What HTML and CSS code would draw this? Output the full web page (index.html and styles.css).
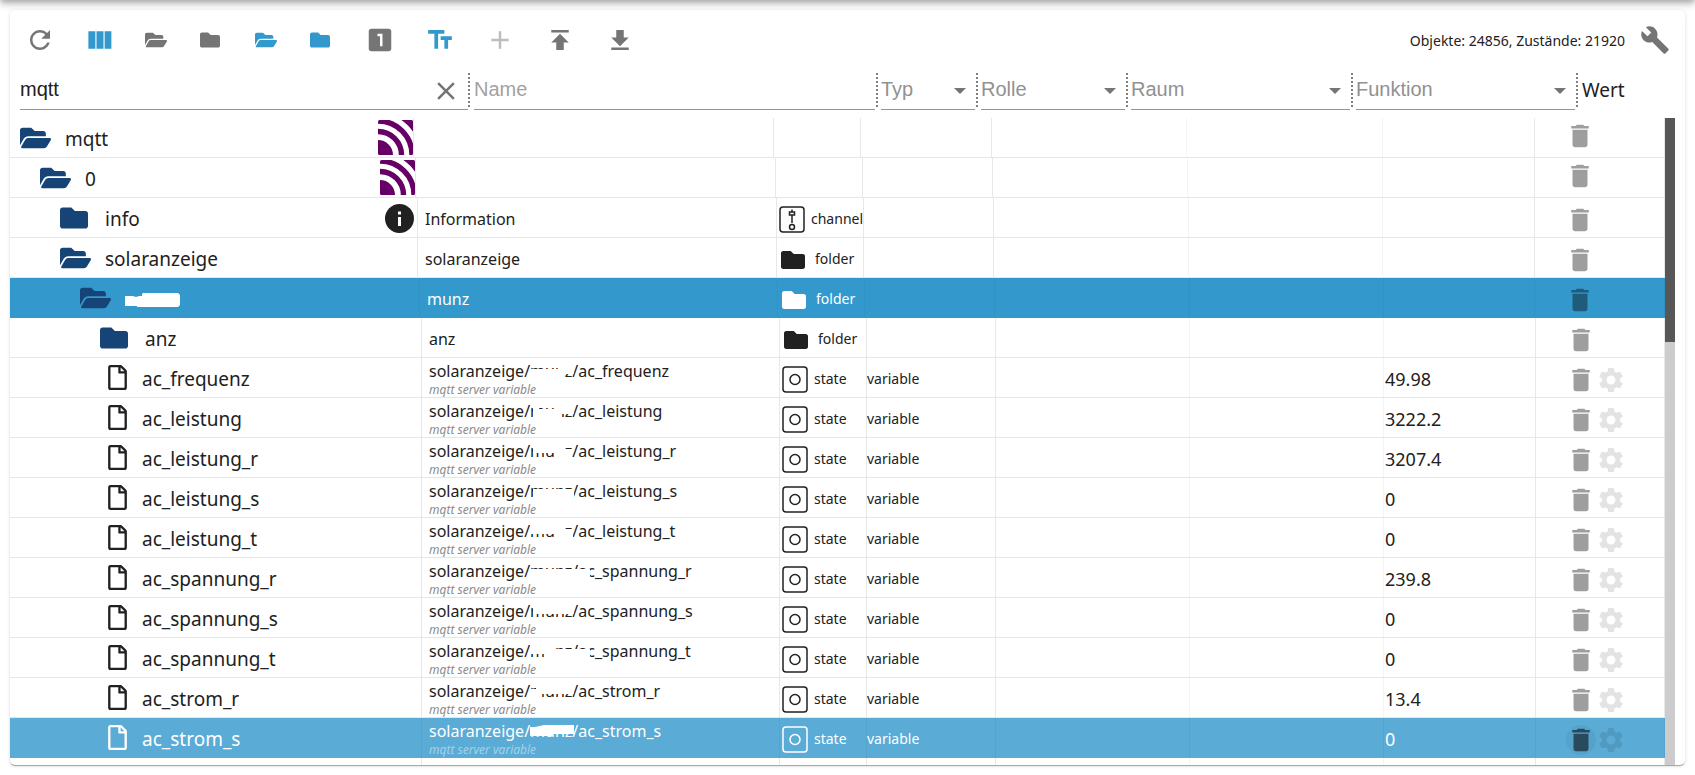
FILE: index.html
```
<!DOCTYPE html>
<html lang="de">
<head>
<meta charset="utf-8">
<title>Objekte</title>
<link rel="stylesheet" href="styles.css">
</head>
<body>
<svg class="sprite" aria-hidden="true">
  <symbol id="open" viewBox="0 0 576 512"><path d="M572.694 292.093L500.270 416.248A63.997 63.997 0 0 1 444.989 448H45.025c-18.523 0-30.064-20.093-20.731-36.093l72.424-124.155A64 64 0 0 1 152 256h399.964c18.523 0 30.064 20.093 20.730 36.093zM152 224h328v-48c0-26.510-21.490-48-48-48H272l-64-64H48C21.490 64 0 85.490 0 112v278.046l69.077-118.418C86.214 242.250 117.989 224 152 224z"/></symbol>
  <symbol id="closed" viewBox="0 0 512 512"><path d="M464 128H272l-64-64H48C21.490 64 0 85.490 0 112v288c0 26.510 21.490 48 48 48h416c26.510 0 48-21.490 48-48V176c0-26.510-21.490-48-48-48z"/></symbol>
  <symbol id="file" viewBox="0 0 384 512"><path d="M369.900 97.900L286 14C277 5 264.800-.1 252.100-.1H48C21.500 0 0 21.500 0 48v416c0 26.500 21.500 48 48 48h288c26.500 0 48-21.500 48-48V131.900c0-12.700-5.100-25-14.100-34zM332.100 128H256V51.900l76.100 76.100zM48 464V48h160v104c0 13.300 10.700 24 24 24h104v288H48z"/></symbol>
  <symbol id="trash" viewBox="0 0 24 24"><path d="M6 19c0 1.100.9 2 2 2h8c1.100 0 2-.9 2-2V7H6v12zM19 4h-3.500l-1-1h-5l-1 1H5v2h14V4z"/></symbol>
  <symbol id="gear" viewBox="0 0 24 24"><path d="M19.140 12.940c.04-.3.06-.61.06-.94 0-.32-.02-.64-.07-.94l2.030-1.580c.18-.14.23-.41.12-.61l-1.920-3.320c-.12-.22-.37-.29-.59-.22l-2.390.96c-.5-.38-1.030-.7-1.620-.94l-.36-2.540c-.04-.24-.24-.41-.48-.41h-3.840c-.24 0-.43.17-.47.41l-.36 2.540c-.59.24-1.130.57-1.620.94l-2.390-.96c-.22-.08-.47 0-.59.22L2.740 8.870c-.12.21-.08.47.12.61l2.030 1.580c-.05.3-.09.63-.09.94s.02.64.07.94l-2.030 1.580c-.18.14-.23.41-.12.61l1.920 3.320c.12.22.37.29.59.22l2.390-.96c.5.38 1.030.7 1.620.94l.36 2.540c.05.24.24.41.48.41h3.840c.24 0 .44-.17.47-.41l.36-2.540c.59-.24 1.130-.56 1.620-.94l2.390.96c.22.08.47 0 .59-.22l1.920-3.320c.12-.22.07-.47-.12-.61l-2.010-1.580zM12 15.600c-1.980 0-3.600-1.620-3.600-3.600s1.620-3.600 3.600-3.600 3.600 1.620 3.600 3.600-1.620 3.600-3.600 3.600z"/></symbol>
  <symbol id="state" viewBox="0 0 26 27"><rect x="1" y="1" width="24" height="25" rx="3" fill="none" stroke="currentColor" stroke-width="1.500"/><circle cx="13" cy="13.500" r="5" fill="none" stroke="currentColor" stroke-width="1.500"/></symbol>
  <symbol id="channel" viewBox="0 0 26 27"><g fill="none" stroke="currentColor" stroke-width="1.500"><rect x="1" y="1" width="24" height="25" rx="3"/><path d="M13 3.500v2M10.500 6h5v3h-5zM13 9v8"/><circle cx="13" cy="21" r="2.500"/></g></symbol>
  <symbol id="mqtt" viewBox="0 0 35 35"><clipPath id="sq"><rect width="35" height="35" rx="1.500"/></clipPath><g clip-path="url(#sq)" fill="none" stroke="#606" stroke-width="5.400"><circle cx="0" cy="35" r="15" fill="#606" stroke="none"/><circle cx="0" cy="35" r="23.500"/><circle cx="0" cy="35" r="34"/><circle cx="0" cy="35" r="47" stroke-width="10"/></g></symbol>
  <symbol id="arrow" viewBox="0 0 12 6"><path d="M0 0h12L6 6z"/></symbol>
</svg>
<div class="appbar-shadow"></div>
<main class="card">
  <div class="toolbar">
    <button class="tool" aria-label="Aktualisieren"><svg viewBox="0 0 24 24"><path d="M17.650 6.350C16.200 4.900 14.210 4 12 4c-4.420 0-7.990 3.580-7.990 8s3.570 8 7.990 8c3.730 0 6.840-2.550 7.730-6h-2.080c-.82 2.330-3.040 4-5.650 4-3.310 0-6-2.690-6-6s2.690-6 6-6c1.660 0 3.140.69 4.220 1.780L13 11h7V4l-2.350 2.350z"/></svg></button>
    <button class="tool blue" aria-label="Spalten"><svg viewBox="0 0 24 24"><path d="M2.700 5h5.600v14H2.700zM9.200 5h5.600v14H9.200zM15.700 5h5.400v14h-5.400z"/></svg></button>
    <button class="tool small" aria-label="Alle aufklappen"><svg><use href="#open"/></svg></button>
    <button class="tool small shut" aria-label="Alle zuklappen"><svg><use href="#closed"/></svg></button>
    <button class="tool small blue" aria-label="Eine Ebene aufklappen"><svg><use href="#open"/></svg></button>
    <button class="tool small shut blue" aria-label="Eine Ebene zuklappen"><svg><use href="#closed"/></svg></button>
    <button class="tool" aria-label="Zustände"><svg viewBox="0 0 24 24"><path d="M19 3H5c-1.100 0-2 .9-2 2v14c0 1.100.9 2 2 2h14c1.100 0 2-.9 2-2V5c0-1.100-.9-2-2-2zm-5 14h-2V9h-2V7h4v10z"/></svg></button>
    <button class="tool blue" aria-label="Beschreibungen"><svg viewBox="0 0 24 24"><path d="M2.500 4v3h5v12h3V7h5V4h-13zm19 5h-9v3h3v7h3v-7h3V9z"/></svg></button>
    <button class="tool" disabled aria-label="Hinzufügen"><svg viewBox="0 0 24 24"><path d="M19 13h-6v6h-2v-6H5v-2h6V5h2v6h6v2z"/></svg></button>
    <button class="tool" aria-label="Hochladen"><svg viewBox="0 0 24 24"><path d="M5 4v2h14V4H5zm0 10h4v6h6v-6h4l-7-7-7 7z"/></svg></button>
    <button class="tool" aria-label="Herunterladen"><svg viewBox="0 0 24 24"><path d="M19 10h-4V4H9v6H5l7 7 7-7zM5 18v2h14v-2H5z"/></svg></button>
    <span class="count">Objekte: 24856, Zustände: 21920</span>
    <button class="tool wrench" aria-label="Einstellungen"><svg viewBox="0 0 24 24"><path d="M22.700 19l-9.100-9.100c.9-2.300.4-5-1.500-6.900-2-2-5-2.400-7.400-1.300L9 6 6 9 1.600 4.700C.4 7.100.9 10.100 2.900 12.100c1.900 1.900 4.600 2.400 6.900 1.500l9.100 9.100c.4.4 1 .4 1.400 0l2.300-2.300c.5-.4.5-1.100.1-1.400z"/></svg></button>
  </div>
  <div class="filters">
    <div class="filter"><div class="field"><input type="text" value="mqtt" aria-label="ID"><button class="clear" aria-label="Leeren"><svg viewBox="0 0 24 24"><path d="M19 6.410L17.590 5 12 10.590 6.410 5 5 6.410 10.590 12 5 17.590 6.410 19 12 13.410 17.590 19 19 17.590 13.410 12z"/></svg></button></div></div>
    <div class="filter"><div class="field"><input type="text" placeholder="Name" aria-label="Name"></div></div>
    <div class="filter"><div class="field"><select aria-label="Typ"><option>Typ</option></select><svg><use href="#arrow"/></svg></div></div>
    <div class="filter"><div class="field"><select aria-label="Rolle"><option>Rolle</option></select><svg><use href="#arrow"/></svg></div></div>
    <div class="filter"><div class="field"><select aria-label="Raum"><option>Raum</option></select><svg><use href="#arrow"/></svg></div></div>
    <div class="filter"><div class="field"><select aria-label="Funktion"><option>Funktion</option></select><svg><use href="#arrow"/></svg></div></div>
    <div class="value-title">Wert</div>
  </div>
  <div class="view">
    <table class="tree">
      <tbody>
        <tr class="d0"><td class="id"><svg class="open"><use href="#open"/></svg><span>mqtt</span><svg class="logo"><use href="#mqtt"/></svg></td><td class="name"></td><td class="type"></td><td></td><td></td><td></td><td></td><td class="act high"><button aria-label="Löschen"><svg><use href="#trash"/></svg></button></td></tr>
        <tr class="d1"><td class="id"><svg class="open"><use href="#open"/></svg><span>0</span><svg class="logo"><use href="#mqtt"/></svg></td><td class="name"></td><td class="type"></td><td></td><td></td><td></td><td></td><td class="act high"><button aria-label="Löschen"><svg><use href="#trash"/></svg></button></td></tr>
        <tr class="d2"><td class="id"><svg class="closed"><use href="#closed"/></svg><span>info</span><svg class="info" viewBox="0 0 29 29"><circle cx="14.500" cy="14.500" r="14.500"/><path fill="#fff" d="M13 7.500h3v3h-3zM13 13h3v9h-3z"/></svg></td><td class="name">Information</td><td class="type"><svg class="box"><use href="#channel"/></svg><span>channel</span></td><td></td><td></td><td></td><td></td><td class="act"><button aria-label="Löschen"><svg><use href="#trash"/></svg></button></td></tr>
        <tr class="d2"><td class="id"><svg class="open"><use href="#open"/></svg><span>solaranzeige</span></td><td class="name">solaranzeige</td><td class="type"><svg class="dir"><use href="#closed"/></svg><span>folder</span></td><td></td><td></td><td></td><td></td><td class="act"><button aria-label="Löschen"><svg><use href="#trash"/></svg></button></td></tr>
        <tr class="d3 selected"><td class="id"><svg class="open"><use href="#open"/></svg><svg class="redact" viewBox="0 0 55 14"><path d="M0 3h8l3 1 3-1h3V1l1-1h35l2 2v10l-2 2H12v-1H0z"/></svg></td><td class="name">munz</td><td class="type"><svg class="dir"><use href="#closed"/></svg><span>folder</span></td><td></td><td></td><td></td><td></td><td class="act"><button aria-label="Löschen"><svg><use href="#trash"/></svg></button></td></tr>
        <tr class="d4"><td class="id"><svg class="closed"><use href="#closed"/></svg><span>anz</span></td><td class="name">anz</td><td class="type"><svg class="dir"><use href="#closed"/></svg><span>folder</span></td><td></td><td></td><td></td><td></td><td class="act"><button aria-label="Löschen"><svg><use href="#trash"/></svg></button></td></tr>
        <tr class="d4 leaf"><td class="id"><svg class="file"><use href="#file"/></svg><span>ac_frequenz</span></td><td class="name"><div>solaranzeige/<span class="hide">munz<svg viewBox="0 0 44 20"><path d="M0 5h28V1h16v9H34v3H0z"/></svg></span>/ac_frequenz</div><small>mqtt server variable</small></td><td class="type"><svg class="box"><use href="#state"/></svg><span>state</span></td><td class="role">variable</td><td></td><td></td><td class="val">49.98</td><td class="act"><button aria-label="Löschen"><svg><use href="#trash"/></svg></button><button class="cfg" aria-label="Konfigurieren"><svg><use href="#gear"/></svg></button></td></tr>
        <tr class="d4 leaf"><td class="id"><svg class="file"><use href="#file"/></svg><span>ac_leistung</span></td><td class="name"><div>solaranzeige/<span class="hide">munz<svg viewBox="0 0 44 20"><path d="M3 1h6v4h16V1h19v9H32v3H3z"/></svg></span>/ac_leistung</div><small>mqtt server variable</small></td><td class="type"><svg class="box"><use href="#state"/></svg><span>state</span></td><td class="role">variable</td><td></td><td></td><td class="val">3222.2</td><td class="act"><button aria-label="Löschen"><svg><use href="#trash"/></svg></button><button class="cfg" aria-label="Konfigurieren"><svg><use href="#gear"/></svg></button></td></tr>
        <tr class="d4 leaf"><td class="id"><svg class="file"><use href="#file"/></svg><span>ac_leistung_r</span></td><td class="name"><div>solaranzeige/<span class="hide">munz<svg viewBox="0 0 44 20"><path d="M3 1h31v4h8v8H24V9H3z"/></svg></span>/ac_leistung_r</div><small>mqtt server variable</small></td><td class="type"><svg class="box"><use href="#state"/></svg><span>state</span></td><td class="role">variable</td><td></td><td></td><td class="val">3207.4</td><td class="act"><button aria-label="Löschen"><svg><use href="#trash"/></svg></button><button class="cfg" aria-label="Konfigurieren"><svg><use href="#gear"/></svg></button></td></tr>
        <tr class="d4 leaf"><td class="id"><svg class="file"><use href="#file"/></svg><span>ac_leistung_s</span></td><td class="name"><div>solaranzeige/<span class="hide">munz<svg viewBox="0 0 44 20"><path d="M3 5h41v8H3z"/></svg></span>/ac_leistung_s</div><small>mqtt server variable</small></td><td class="type"><svg class="box"><use href="#state"/></svg><span>state</span></td><td class="role">variable</td><td></td><td></td><td class="val">0</td><td class="act"><button aria-label="Löschen"><svg><use href="#trash"/></svg></button><button class="cfg" aria-label="Konfigurieren"><svg><use href="#gear"/></svg></button></td></tr>
        <tr class="d4 leaf"><td class="id"><svg class="file"><use href="#file"/></svg><span>ac_leistung_t</span></td><td class="name"><div>solaranzeige/<span class="hide">munz<svg viewBox="0 0 44 20"><path d="M0 1h34v4h9v8H25v-3H0z"/></svg></span>/ac_leistung_t</div><small>mqtt server variable</small></td><td class="type"><svg class="box"><use href="#state"/></svg><span>state</span></td><td class="role">variable</td><td></td><td></td><td class="val">0</td><td class="act"><button aria-label="Löschen"><svg><use href="#trash"/></svg></button><button class="cfg" aria-label="Konfigurieren"><svg><use href="#gear"/></svg></button></td></tr>
        <tr class="d4 leaf"><td class="id"><svg class="file"><use href="#file"/></svg><span>ac_spannung_r</span></td><td class="name"><div>solaranzeige/<span class="hide">munz<svg viewBox="0 0 44 20"><path d="M0 5h60v8H0z"/></svg></span>/ac_spannung_r</div><small>mqtt server variable</small></td><td class="type"><svg class="box"><use href="#state"/></svg><span>state</span></td><td class="role">variable</td><td></td><td></td><td class="val">239.8</td><td class="act"><button aria-label="Löschen"><svg><use href="#trash"/></svg></button><button class="cfg" aria-label="Konfigurieren"><svg><use href="#gear"/></svg></button></td></tr>
        <tr class="d4 leaf"><td class="id"><svg class="file"><use href="#file"/></svg><span>ac_spannung_s</span></td><td class="name"><div>solaranzeige/<span class="hide">munz<svg viewBox="0 0 44 20"><path d="M3 1h41v9H3z"/></svg></span>/ac_spannung_s</div><small>mqtt server variable</small></td><td class="type"><svg class="box"><use href="#state"/></svg><span>state</span></td><td class="role">variable</td><td></td><td></td><td class="val">0</td><td class="act"><button aria-label="Löschen"><svg><use href="#trash"/></svg></button><button class="cfg" aria-label="Konfigurieren"><svg><use href="#gear"/></svg></button></td></tr>
        <tr class="d4 leaf"><td class="id"><svg class="file"><use href="#file"/></svg><span>ac_spannung_t</span></td><td class="name"><div>solaranzeige/<span class="hide">munz<svg viewBox="0 0 44 20"><path d="M0 1h25v4h35v8H15v-3H0z"/></svg></span>/ac_spannung_t</div><small>mqtt server variable</small></td><td class="type"><svg class="box"><use href="#state"/></svg><span>state</span></td><td class="role">variable</td><td></td><td></td><td class="val">0</td><td class="act"><button aria-label="Löschen"><svg><use href="#trash"/></svg></button><button class="cfg" aria-label="Konfigurieren"><svg><use href="#gear"/></svg></button></td></tr>
        <tr class="d4 leaf"><td class="id"><svg class="file"><use href="#file"/></svg><span>ac_strom_r</span></td><td class="name"><div>solaranzeige/<span class="hide">munz<svg viewBox="0 0 44 20"><path d="M0 5h6V1h38v9H12v3H0z"/></svg></span>/ac_strom_r</div><small>mqtt server variable</small></td><td class="type"><svg class="box"><use href="#state"/></svg><span>state</span></td><td class="role">variable</td><td></td><td></td><td class="val">13.4</td><td class="act"><button aria-label="Löschen"><svg><use href="#trash"/></svg></button><button class="cfg" aria-label="Konfigurieren"><svg><use href="#gear"/></svg></button></td></tr>
        <tr class="d4 leaf hover"><td class="id"><svg class="file"><use href="#file"/></svg><span>ac_strom_s</span></td><td class="name"><div>solaranzeige/<span class="hide">munz<svg viewBox="0 0 44 20"><path d="M0 3h5l9-2h30v9H22v2H0z"/></svg></span>/ac_strom_s</div><small>mqtt server variable</small></td><td class="type"><svg class="box"><use href="#state"/></svg><span>state</span></td><td class="role">variable</td><td></td><td></td><td class="val">0</td><td class="act"><button aria-label="Löschen"><svg><use href="#trash"/></svg></button><button class="cfg" aria-label="Konfigurieren"><svg><use href="#gear"/></svg></button></td></tr>
        <tr class="d4 leaf"><td class="id"></td><td class="name"><div>solaranzeige/munz/ac_strom_t</div></td><td class="type"></td><td></td><td></td><td></td><td></td><td class="act"></td></tr>
      </tbody>
    </table>
    <div class="scroll"><div class="thumb"></div></div>
  </div>
</main>
</body>
</html>
```
FILE: styles.css
```
* { box-sizing: border-box; }
body {
  margin: 0;
  height: 100vh;
  padding: 10px;
  display: flex;
  overflow: hidden;
  background: #fff;
  color: #212121;
  font-family: "Noto Sans", "Open Sans", sans-serif;
}
.sprite { position: absolute; width: 0; height: 0; }
svg { fill: currentColor; flex: none; display: block; }
button { border: 0; padding: 0; background: none; color: inherit; display: flex; align-items: center; justify-content: center; }
.appbar-shadow {
  position: absolute;
  top: -20px;
  left: 0;
  right: 0;
  height: 20px;
  box-shadow: 0 2px 5px -1px rgba(0,0,0,.2), 0 5px 6px 0 rgba(0,0,0,.14), 0 1px 12px 0 rgba(0,0,0,.12);
}
.card {
  flex: 1;
  min-width: 0;
  display: flex;
  flex-direction: column;
  background: #fff;
  border-radius: 5px;
  overflow: hidden;
  box-shadow: 0 2px 1px -1px rgba(0,0,0,.2), 0 1px 1px 0 rgba(0,0,0,.14), 0 1px 4px 0 rgba(0,0,0,.12);
}
.toolbar { display: flex; align-items: center; height: 60px; flex: none; color: #757575; }
.tool { width: 60px; height: 60px; }
.tool svg { width: 30px; height: 30px; }
.tool.small { width: 55px; justify-content: flex-start; padding-left: 15px; }
.tool.small svg { width: 22px; height: 20px; }
.tool.shut svg { width: 20px; }
.tool.blue { color: #39c; }
.tool:disabled { color: #bdbdbd; }
.count { margin-left: auto; font-size: 14px; color: #212121; }
.filters {
  flex: none;
  display: grid;
  grid-template-columns: 450fr 408fr 100fr 150fr 225fr 225fr 97fr;
  padding: 3px 10px 8px;
}
.filter { position: relative; padding: 0 3px; min-width: 0; }
.filter:first-child { padding: 0 2px 0 0; }
.filter:nth-child(2) { padding-left: 4px; }
.filter::after {
  content: "";
  position: absolute;
  top: 0;
  right: 0;
  width: 2px;
  height: 34px;
  background: repeating-linear-gradient(#808080 0 2px, transparent 2px 4px);
}
.field { display: flex; align-items: center; height: 37px; border-bottom: 1px solid #949494; }
.field input, .field select {
  flex: 1;
  min-width: 0;
  height: 36px;
  padding: 0 0 4px;
  border: 0;
  background: none;
  outline: 0;
  appearance: none;
  color: #212121;
  font: 20px "Liberation Sans", Arial, sans-serif;
}
.field select { color: #919191; }
.field input::placeholder { color: #a2a2a2; opacity: 1; }
.field > svg { width: 12px; height: 6px; margin-right: 9px; color: #757575; }
.clear { width: 30px; height: 30px; margin-right: 7px; color: #757575; }
.clear svg { width: 30px; height: 30px; }
.value-title { padding-left: 4px; font-size: 19px; line-height: 35px; }
.view { flex: 1; min-height: 0; display: flex; overflow: hidden; padding-right: 10px; }
.tree { flex: 1; min-width: 0; display: block; }
.tree tbody { display: block; }
.tree tr { display: grid; grid-template-rows: 39px; border-bottom: 1px solid #e6e6e6; }
.tree td {
  padding: 0;
  min-width: 0;
  display: flex;
  align-items: center;
  border-right: 1px solid #e8e8e8;
  white-space: nowrap;
  line-height: 20px;
}
.tree td:nth-child(5), .tree td:nth-child(6) { border-color: #f4f4f4; }
.tree .d0 { grid-template-columns: 404fr 360fr 87fr 131fr 195fr 196fr 152fr 130fr; }
.tree .d1 { grid-template-columns: 406fr 360fr 87fr 130fr 195fr 195fr 152fr 130fr; }
.tree .d2 { grid-template-columns: 408fr 359fr 87fr 130fr 195fr 194fr 152fr 130fr; }
.tree .d3 { grid-template-columns: 410fr 358fr 87fr 130fr 195fr 194fr 151fr 130fr; }
.tree .d4 { grid-template-columns: 412fr 358fr 87fr 129fr 194fr 194fr 152fr 129fr; }
.tree .id { font-size: 19px; }
.d0 .id { padding-left: 10px; }
.d1 .id { padding-left: 30px; }
.d2 .id { padding-left: 50px; }
.d3 .id { padding-left: 70px; }
.d4 .id { padding-left: 90px; }
.leaf .id { padding-left: 98px; }
.id .open, .id .closed { color: #164477; height: 28px; }
.id .open { width: 31px; margin-right: 14px; }
.id .closed { width: 28px; margin-right: 17px; }
.id .file { width: 19px; height: 25px; margin-right: 15px; }
.id span { padding-top: 3px; }
.id .logo { width: 35px; height: 35px; margin-left: auto; }
.id .info { width: 29px; height: 29px; margin: 2px 3px 0 auto; }
.id .redact { width: 55px; height: 14px; margin-top: 4px; color: #fff; }
.tree .name { padding: 2px 7px 0; font-size: 16px; }
.leaf .name { flex-direction: column; align-items: flex-start; justify-content: flex-start; padding-top: 3px; }
.name small { font-size: 12px; line-height: 18px; font-style: italic; color: #8a8a8a; }
.hide { position: relative; }
.hide svg { position: absolute; left: 0; bottom: -2px; width: 44px; height: 20px; overflow: visible; color: #fff; }
.tree .type, .tree .role { font-size: 14px; }
.tree .type { padding-left: 2px; overflow: hidden; }
.type span { padding-top: 2px; }
.type .box { width: 26px; height: 27px; margin: 4px 6px 0 0; }
.type .dir { width: 24px; height: 24px; margin: 4px 10px 0 2px; }
.tree .val { padding: 2px 0 0 1px; font-size: 18px; }
.tree .role { padding-top: 2px; }
.tree .act { padding: 4px 0 0 30px; }
.tree .act.high { padding: 0 0 3px 30px; }
.act button { width: 30px; height: 30px; border-radius: 50%; color: #9e9e9e; }
.act svg { width: 30px; height: 30px; }
.act .cfg { color: #e3e3e3; }
.tree .selected { background: #39c; border-color: #39c; color: #fff; }
.tree .hover { background: #5aabd6; border-color: #5aabd6; color: #fff; }
.tree .selected td, .tree .hover td { border-color: rgba(0,0,0,.04); }
.selected .act button { color: #1f5c7a; }
.hover .act button { color: #294a5c; background: #55a2cb; }
.hover .act .cfg { color: #5199c0; background: none; }
.hover small { color: #a5d1e9; }
.scroll { flex: none; width: 10px; background: #ccc; }
.thumb { height: 224px; background: #575757; }
```
